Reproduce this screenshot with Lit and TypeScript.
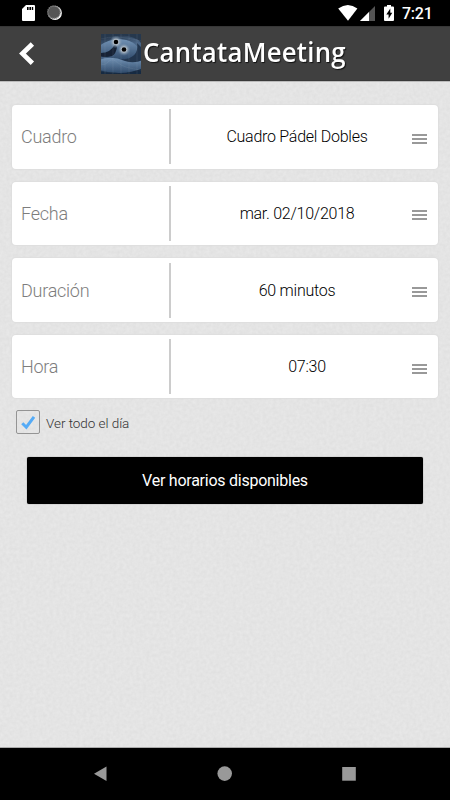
import { LitElement, html, css, svg } from "lit";
import { customElement, property, state } from "lit/decorators.js";

@customElement("status-bar")
class StatusBar extends LitElement {
  static styles = css`
    :host { display: flex; height: 26px; background: #000; color: #fff; flex: none; }
    svg { display: block; }
    .left { flex: 1; }
    .time { width: 48px; font: 500 16px/28px Roboto, sans-serif; letter-spacing: -0.250px; white-space: nowrap; }
  `;
  render() {
    return html`
      <div class="left">
        <svg width="80" height="26" viewBox="0 0 80 26">
          <path d="M26 5h8q1 0 1 1v14q0 1-1 1H23q-1 0-1-1V9z" fill="#fff" />
          <path d="M27 7h1.6v3H27zM29.4 7H31v3h-1.6zM31.8 7h1.4v3h-1.4z" fill="#000" />
          <circle cx="55" cy="13" r="6.9" fill="#fff" />
          <circle cx="54" cy="12.2" r="6.3" fill="#555" stroke="#8a8a8a" stroke-width="1.4" stroke-dasharray="1.3 .8" />
        </svg>
      </div>
      <svg width="65" height="26" viewBox="337 0 65 26">
        <path d="M338.2 8.6Q348 1.6 357.4 8.6L348 20.8z" fill="#fff" />
        <path d="M375 6v15h-15z" fill="#545454" />
        <path d="M369 12v9h-9z" fill="#fff" />
        <path d="M387 5h4v1.6h2q1 0 1 1V20q0 1-1 1h-8q-1 0-1-1V7.600q0-1 1-1h2z" fill="#fff" />
        <path d="M390.300 8.600l-4 5.900h2.300v4.200l3.700-5.900h-2z" fill="#000" />
      </svg>
      <div class="time">7:21</div>
    `;
  }
}

@customElement("app-header")
class AppHeader extends LitElement {
  static styles = css`
    :host { display: flex; height: 55px; background: #404040; color: #fff; flex: none; position: relative; z-index: 1;
      box-sizing: border-box; border-top: 1px solid #373737; border-bottom: 1px solid #393939; box-shadow: 0 1px 0 #bbb; }
    svg { display: block; }
    .back { width: 101px; }
    .logo { width: 40px; padding-top: 7px; }
    .title { margin-left: 2px; font: 600 27px/50px "Open Sans", "Noto Sans", sans-serif; letter-spacing: 0.25px;
      white-space: nowrap; text-shadow: 1px 1px 1px #111; transform: scaleX(.955); transform-origin: 0 0; }
  `;
  render() {
    return html`
      <div class="back">
        <svg width="101" height="53" viewBox="0 27 101 53">
          <path d="M32.400 44L22.500 53.600L32.400 63.200" fill="none" stroke="#fff" stroke-width="4.800" />
        </svg>
      </div>
      <div class="logo">
        <svg width="40" height="40" viewBox="0 0 40 40">
          <defs>
            <linearGradient id="base" x1="0" y1="0" x2="0.2" y2="1">
              <stop offset="0" stop-color="#1c2a3c" /><stop offset=".4" stop-color="#4b6788" />
              <stop offset=".7" stop-color="#3c5878" /><stop offset="1" stop-color="#1a2c42" />
            </linearGradient>
            <radialGradient id="glow">
              <stop offset=".25" stop-color="#dfe2e4" /><stop offset=".6" stop-color="#9aabbb" stop-opacity=".65" />
              <stop offset="1" stop-color="#6684a2" stop-opacity="0" />
            </radialGradient>
            <linearGradient id="wave" x1="0" y1="0" x2="0" y2="1">
              <stop offset="0" stop-color="#7393b5" /><stop offset="1" stop-color="#2f4a6a" />
            </linearGradient>
            <filter id="soft"><feGaussianBlur stdDeviation=".7" /></filter>
            <clipPath id="frame"><rect width="40" height="40" /></clipPath>
          </defs>
          <g clip-path="url(#frame)">
            <rect width="40" height="40" fill="url(#base)" />
            <g filter="url(#soft)">
              <path d="M-2 7Q12 0 27 2Q38 4 42 12V-2H-2z" fill="#26374d" />
              <path d="M-2 12Q8 5 18 5Q34 6 38 16Q38 23 30 25Q17 28 -2 20z" fill="url(#wave)" />
              <path d="M-2 19Q9 20 14 10L16 13Q15 20 11 22Q4 24 -2 22z" fill="#142134" />
              <path d="M12 25Q39 28 36 9L42 15V28Q32 31 12 25z" fill="#20344e" />
              <path d="M-2 26Q10 21 24 27Q33 30 42 26V34Q22 43 -2 36z" fill="url(#wave)" />
              <path d="M-2 37Q20 43 42 35V42H-2z" fill="#172a42" />
            </g>
            <path d="M4 0v40M12 0v40M20 0v40M28 0v40M36 0v40M0 30Q4 32 8 27Q12 24 17 29Q23 34 40 36M0 5Q14 0 40 7" fill="none" stroke="#9fb5ca" stroke-opacity=".25" stroke-width=".5" />
            <circle cx="15" cy="8" r="6.500" fill="url(#glow)" />
            <circle cx="23" cy="15.500" r="6.500" fill="url(#glow)" />
            <circle cx="15" cy="8" r="2.300" fill="#000" />
            <circle cx="23" cy="15.500" r="2.300" fill="#000" />
          </g>
        </svg>
      </div>
      <div class="title">CantataMeeting</div>
    `;
  }
}

@customElement("field-row")
class FieldRow extends LitElement {
  @property() label = "";
  @property() value = "";
  @property({ type: Boolean, reflect: true }) offset = false;
  static styles = css`
    :host { display: flex; align-items: center; box-sizing: border-box; height: 63.700px; background: #fff;
      border-radius: 4px; box-shadow: 0 0 1px 1px #dedede; font-family: Roboto, sans-serif; font-weight: 300; }
    .label { width: 157px; box-sizing: border-box; padding: 1px 0 0 9px; font-size: 18px; letter-spacing: -0.250px;
      line-height: 22px; color: #7d7d7d; }
    .divider { width: 2px; height: 55px; background: #ccc; }
    .value { flex: 1; padding: 1px 0 0 11px; text-align: center; font-size: 16px; letter-spacing: -0.260px;
      line-height: 22px; color: #000; }
    :host([offset]) .value { padding-left: 31px; }
    .handle { width: 15px; padding: 4px 11px 0 0; display: flex; flex-direction: column; gap: 2px; }
    .bar { height: 2px; background: #999; }
  `;
  render() {
    return html`
      <div class="label">${this.label}</div>
      <div class="divider"></div>
      <div class="value">${this.value}</div>
      <div class="handle"><div class="bar"></div><div class="bar"></div><div class="bar"></div></div>
    `;
  }
}

@customElement("nav-bar")
class NavBar extends LitElement {
  static styles = css`
    :host { display: block; height: 52px; background: #000; flex: none; position: relative; z-index: 1; box-shadow: 0 -1px 0 #aaa; }
    svg { display: block; }
  `;
  render() {
    return html`
      <svg width="450" height="52" viewBox="0 748 450 52">
        <path d="M94 773.700L106.500 766.500V781z" fill="#999" />
        <circle cx="224.700" cy="773.600" r="7.300" fill="#999" />
        <rect x="342.200" y="767" width="13.600" height="13.700" fill="#999" />
      </svg>
    `;
  }
}

@customElement("app-root")
class AppRoot extends LitElement {
  @state() private wholeDay = true;
  private fields = [
    { label: "Cuadro", value: "Cuadro Pádel Dobles" },
    { label: "Fecha", value: "mar. 02/10/2018" },
    { label: "Duración", value: "60 minutos" },
    { label: "Hora", value: "07:30", offset: true },
  ];
  static styles = css`
    :host { display: flex; flex-direction: column; width: 450px; height: 800px; overflow: hidden;
      background: #e4e4e4; font-family: Roboto, sans-serif; }
    .content { flex: 1; position: relative; }
    .paper { position: absolute; inset: 0; width: 100%; height: 100%; }
    .paper filter { color-interpolation-filters: sRGB; }
    .form { position: relative; padding: 24px 12px 0; }
    .rows { display: flex; flex-direction: column; gap: 12.900px; }
    .check { display: flex; align-items: center; gap: 6px; margin: 11.700px 0 0 4px; height: 24px;
      font-size: 13.500px; font-weight: 350; letter-spacing: -0.050px; color: #333; cursor: pointer; }
    .check span { padding-top: 1px; }
    .box { width: 24px; height: 24px; box-sizing: border-box; border: 1px solid #949494; border-radius: 2px; }
    .box svg { display: block; }
    .submit { display: block; width: 396px; height: 47.500px; margin: 22.500px 0 0 15px; padding: 1px 0 0 0; border: 0;
      border-radius: 2px; background: #000; box-shadow: 0 0 1px #555; color: #fff; font: 400 16px/46px Roboto, sans-serif;
      letter-spacing: -0.250px; }
  `;
  render() {
    return html`
      <status-bar></status-bar>
      <app-header></app-header>
      <div class="content">
        <svg class="paper">
          <filter id="grain" x="0" y="0" width="100%" height="100%">
            <feTurbulence type="fractalNoise" baseFrequency=".3" numOctaves="2" seed="4" />
            <feColorMatrix values=".045 0 0 0 .872  .045 0 0 0 .872  .045 0 0 0 .872  0 0 0 0 1" />
          </filter>
          <rect width="100%" height="100%" filter="url(#grain)" />
        </svg>
        <div class="form">
          <div class="rows">
            ${this.fields.map((f) => html`
              <field-row .label=${f.label} .value=${f.value} ?offset=${f.offset}></field-row>`)}
          </div>
          <div class="check" @click=${() => (this.wholeDay = !this.wholeDay)}>
            <div class="box">
              <svg width="22" height="22" viewBox="0 0 22 22">
                ${this.wholeDay
                  ? svg`<path d="M5.300 12.200L9.300 16.200L17 5.800" fill="none" stroke="#55abf6" stroke-width="3" />`
                  : null}
              </svg>
            </div>
            <span>Ver todo el día</span>
          </div>
          <button class="submit">Ver horarios disponibles</button>
        </div>
      </div>
      <nav-bar></nav-bar>
    `;
  }
}
